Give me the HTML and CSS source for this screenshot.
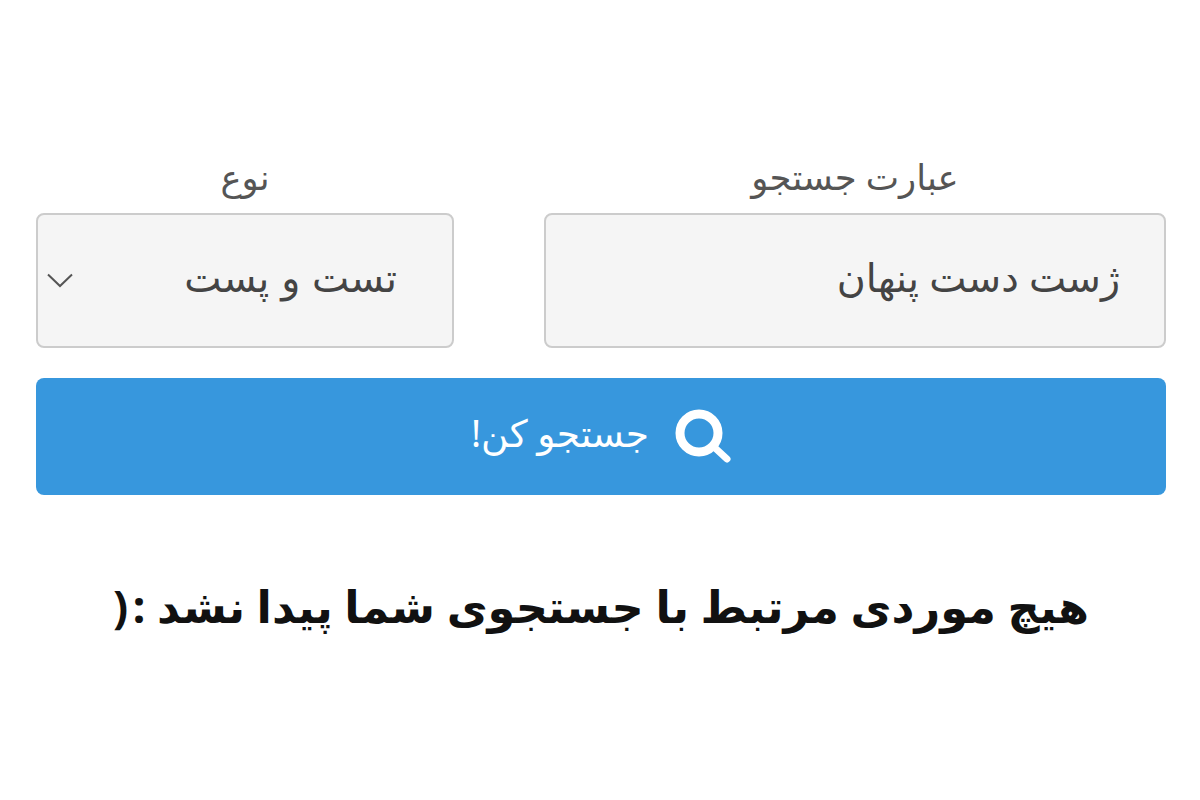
FILE: index.html
```html
<!DOCTYPE html>
<html lang="fa" dir="rtl">
<head>
<meta charset="utf-8">
<title>جستجو</title>
<link rel="stylesheet" href="styles.css">
</head>
<body>
<form class="search">
  <div class="fields">
    <div class="field field-term">
      <label class="label">عبارت جستجو</label>
      <div class="control term"><span class="value">ژست دست پنهان</span></div>
    </div>
    <div class="field field-type">
      <label class="label">نوع</label>
      <div class="control type">
        <span class="value">تست و پست</span>
        <svg class="chev" width="26" height="15" viewBox="0 0 26 15"><path d="M1 1.5L13 13 25 1.5" fill="none" stroke="#555" stroke-width="2"/></svg>
      </div>
    </div>
  </div>
  <button class="submit" type="button">
    <svg class="mag" width="56" height="55" viewBox="0 0 56 55"><circle cx="24" cy="24" r="19" fill="none" stroke="#fff" stroke-width="9"/><path d="M39 38l13 12" stroke="#fff" stroke-width="7" stroke-linecap="round"/></svg>
    <span class="submit-text">جستجو کن!</span>
  </button>
</form>
<p class="empty">هیچ موردی مرتبط با جستجوی شما پیدا نشد :&#8202;(</p>
</body>
</html>
```
FILE: styles.css
```css
* { box-sizing: border-box; }
html, body { margin: 0; background: #fff; }
body { height: 800px; padding: 158px 34px 0 36px; font-family: "Noto Sans", "DejaVu Sans", sans-serif; overflow: hidden; }
.fields { display: flex; gap: 90px; }
.field-term { flex: 0 0 622px; }
.field-type { flex: 0 0 418px; }
.label { display: block; height: 55px; line-height: 37px; text-align: center; font-size: 35.4px; color: #555; }
.control { height: 135px; background: #f5f5f5; border: 2px solid #ccc; border-radius: 8px; font-size: 39.5px; color: #444; display: flex; align-items: center; }
.value { padding-bottom: 8px; }
.term { padding-right: 44px; }
.type { padding-right: 55px; justify-content: space-between; padding-left: 9px; }
.type .value { word-spacing: 1.5px; }
.submit { display: flex; align-items: center; justify-content: center; gap: 26px; width: 100%; height: 117px; margin-top: 30px; background: #3797dd; border: 0; border-radius: 8px; color: #fff; font: inherit; font-size: 37.6px; }
.submit-text { padding-bottom: 8px; }
.empty { margin: 76px 0 0; text-align: center; font-size: 44.7px; font-weight: 700; color: #111; line-height: 70px; }
```
